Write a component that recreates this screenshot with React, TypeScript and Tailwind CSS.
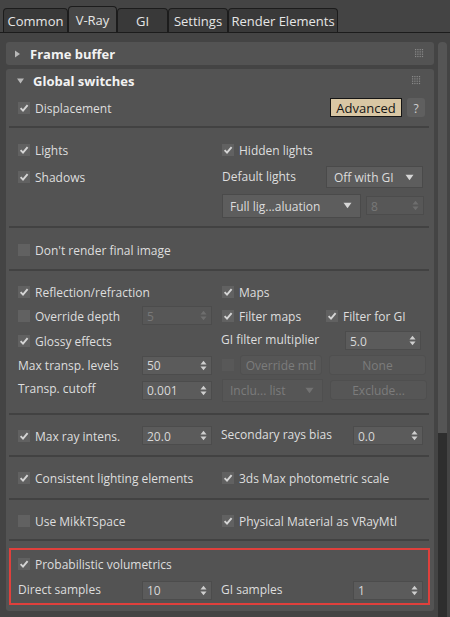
import React from "react";

const FONT = { fontFamily: '"Open Sans", "Noto Sans", sans-serif' };

function Check({ checked = true, disabled = false }: { checked?: boolean; disabled?: boolean }) {
  return (
    <span
      className={
        "flex h-[12px] w-[12px] shrink-0 items-center justify-center " +
        (disabled ? "bg-[#585858]" : "bg-[#616161]")
      }
    >
      {checked && (
        <svg width="10" height="10" viewBox="0 0 10 10">
          <path d="M1.6 5.2 L4 7.6 L8.6 2.2" fill="none" stroke="#d6d6d6" strokeWidth="1.9" />
        </svg>
      )}
    </span>
  );
}

function CheckLabel({ label, checked = true }: { label: string; checked?: boolean }) {
  return (
    <div className="flex items-center gap-[5px]">
      <Check checked={checked} />
      <span className="pt-[2px] text-[#dedede]">{label}</span>
    </div>
  );
}

function Arrows({ disabled = false }: { disabled?: boolean }) {
  const c = disabled ? "#6e6e6e" : "#cfcfcf";
  return (
    <svg width="7" height="11" viewBox="0 0 7 11" className="shrink-0">
      <path d="M0.5 4.5 L3.5 0.8 L6.5 4.5 Z" fill={c} />
      <path d="M0.5 6.5 L3.5 10.2 L6.5 6.5 Z" fill={c} />
    </svg>
  );
}

function Spinner({ value, w, disabled = false }: { value: string; w: string; disabled?: boolean }) {
  return (
    <div
      className={
        "flex h-[19px] items-center justify-between border border-[#4c4c4c] pl-[4px] pr-[4px] " +
        w +
        (disabled ? " bg-[#575757] text-[#787878]" : " bg-[#5b5b5b] text-[#d8d8d8]")
      }
    >
      <span className="pt-[2px]">{value}</span>
      <Arrows disabled={disabled} />
    </div>
  );
}

function Dropdown({ label, w, h = "h-[22px]", disabled = false }: { label: string; w: string; h?: string; disabled?: boolean }) {
  return (
    <div
      className={
        "flex items-center justify-between border pl-[7px] pr-[8px] " +
        w +
        " " +
        h +
        (disabled
          ? " border-[#4f4f4f] bg-[#565656] text-[#7c7c7c]"
          : " border-[#4a4a4a] bg-[#5d5d5d] text-[#dcdcdc]")
      }
    >
      <span className="pt-[2px]">{label}</span>
      <svg width="9" height="7" viewBox="0 0 9 7">
        <path d="M0.5 0.8 L8.5 0.8 L4.5 6.2 Z" fill={disabled ? "#727272" : "#d6d6d6"} />
      </svg>
    </div>
  );
}

function Btn({ label, w }: { label: string; w: string }) {
  return (
    <div
      className={
        "flex h-[20px] items-center justify-center rounded-[3px] border border-[#4f4f4f] bg-[#565656] pt-[2px] text-[#7c7c7c] " +
        w
      }
    >
      {label}
    </div>
  );
}

function Sep({ mt }: { mt: string }) {
  return <div className={"mr-[2px] h-[2px] bg-[#424242] " + mt} />;
}

function Grip() {
  return (
    <svg width="9" height="9" viewBox="0 0 9 9">
      {[0, 1, 2, 3].map((r) =>
        [0, 1, 2, 3].map((c) => <rect key={r + "-" + c} x={c * 2.3} y={r * 2.3} width="1.2" height="1.2" fill="#8a8a8a" />)
      )}
    </svg>
  );
}

function RolloutHead({ title, open }: { title: string; open: boolean }) {
  return (
    <div className="flex h-[23px] items-center justify-between pl-[8px] pr-[10px]">
      <div className="flex items-center gap-[9px]">
        <svg width="7" height="8" viewBox="0 0 7 8">
          {open ? <path d="M0 1.5 L7 1.5 L3.5 6.5 Z" fill="#b8b8b8" /> : <path d="M1 0.5 L6 4 L1 7.5 Z" fill="#b8b8b8" />}
        </svg>
        <span className="pt-[1px] text-[13px] font-bold text-[#f2f2f2]">{title}</span>
      </div>
      <Grip />
    </div>
  );
}

const tabs = ["Common", "V-Ray", "GI", "Settings", "Render Elements"];
const tabW = ["w-[65px]", "w-[49px]", "w-[51px]", "w-[60px]", "w-[110px]"];

export default function App() {
  return (
    <div className="h-[617px] w-[450px] overflow-hidden bg-[#444444] text-[12px] leading-none" style={FONT}>
      {/* tab strip */}
      <div className="flex h-[33px] items-end border-b border-[#1c1c1c] pl-[3px]">
        {tabs.map((t, i) => (
          <div
            key={t}
            className={
              "flex items-center justify-center rounded-t-[4px] border border-b-0 border-[#1c1c1c] pt-[1px] text-[13px] text-[#e6e6e6] " +
              tabW[i] +
              (i === 1 ? " h-[26px] bg-[#464646]" : " h-[24px] bg-[#393939]")
            }
          >
            {t}
          </div>
        ))}
      </div>

      <div className="flex pt-[9px]">
        <div className="ml-[6px] w-[428px]">
          <div className="rounded-[3px] bg-[#535353]">
            <RolloutHead title="Frame buffer" open={false} />
          </div>

          <div className="mt-[4px] h-[542px] rounded-[3px] bg-[#535353] pl-[3px] pr-[3px]">
            <RolloutHead title="Global switches" open={true} />

            <div className="pl-[9px] pr-[6px]">
              <div className="mt-[3px] flex h-[25px] items-center justify-between">
                <CheckLabel label="Displacement" />
                <div className="flex gap-[5px]">
                  <div className="flex h-[19px] w-[72px] items-center justify-center border border-[#151515] bg-[#d9c7a4] pt-[1px] text-[13px] text-[#151515]">
                    Advanced
                  </div>
                  <div className="flex h-[19px] w-[18px] items-center justify-center rounded-[3px] bg-[#5f5f5f] pt-[2px] text-[#cfcfcf]">
                    ?
                  </div>
                </div>
              </div>
            </div>

            <Sep mt="mt-[6px]" />

            <div className="pl-[9px]">
              <div className="mt-[11px] flex h-[22px] items-center">
                <div className="w-[204px]">
                  <CheckLabel label="Lights" />
                </div>
                <CheckLabel label="Hidden lights" />
              </div>
              <div className="mt-[4px] flex h-[24px] items-center">
                <div className="w-[204px]">
                  <CheckLabel label="Shadows" />
                </div>
                <span className="w-[104px] text-[#dedede]">Default lights</span>
                <Dropdown label="Off with GI" w="w-[97px]" />
              </div>
              <div className="mt-[4px] flex h-[25px] items-center">
                <div className="w-[204px]" />
                <Dropdown label="Full lig...aluation" w="w-[139px]" h="h-[24px]" />
                <div className="ml-[5px]">
                  <Spinner value="8" w="w-[58px]" disabled />
                </div>
              </div>
            </div>

            <Sep mt="mt-[8px]" />

            <div className="pl-[9px]">
              <div className="mt-[11px] flex h-[22px] items-center">
                <CheckLabel label="Don't render final image" checked={false} />
              </div>
            </div>

            <Sep mt="mt-[8px]" />

            <div className="pl-[9px]">
              <div className="mt-[10px] flex h-[22px] items-center">
                <div className="w-[204px]">
                  <CheckLabel label="Reflection/refraction" />
                </div>
                <CheckLabel label="Maps" />
              </div>
              <div className="mt-[2px] flex h-[21px] items-center">
                <div className="w-[124px]">
                  <CheckLabel label="Override depth" checked={false} />
                </div>
                <Spinner value="5" w="w-[70px]" disabled />
                <div className="ml-[10px] w-[104px]">
                  <CheckLabel label="Filter maps" />
                </div>
                <CheckLabel label="Filter for GI" />
              </div>
              <div className="mt-[3px] flex h-[23px] items-center">
                <div className="w-[203px]">
                  <CheckLabel label="Glossy effects" />
                </div>
                <span className="w-[124px] pb-[1px] text-[#dedede]">GI filter multiplier</span>
                <Spinner value="5.0" w="w-[76px]" />
              </div>
              <div className="mt-[2px] flex h-[22px] items-center">
                <span className="w-[124px] pt-[1px] text-[#dedede]">Max transp. levels</span>
                <Spinner value="50" w="w-[70px]" />
                <div className="ml-[10px] flex items-center gap-[6px]">
                  <Check checked={false} disabled />
                  <Btn label="Override mtl" w="w-[82px]" />
                </div>
                <div className="ml-[7px]">
                  <Btn label="None" w="w-[97px]" />
                </div>
              </div>
              <div className="mt-[2px] flex h-[24px] items-center">
                <span className="w-[124px] pb-[2px] text-[#dedede]">Transp. cutoff</span>
                <Spinner value="0.001" w="w-[70px]" />
                <div className="ml-[10px]">
                  <Dropdown label="Inclu... list" w="w-[101px]" h="h-[23px]" disabled />
                </div>
                <div className="ml-[7px]">
                  <Btn label="Exclude..." w="w-[97px]" />
                </div>
              </div>
            </div>

            <Sep mt="mt-[11px]" />

            <div className="pl-[9px]">
              <div className="mt-[10px] flex h-[21px] items-center">
                <div className="w-[124px]">
                  <CheckLabel label="Max ray intens." />
                </div>
                <Spinner value="20.0" w="w-[70px]" />
                <span className="ml-[9px] w-[132px] pb-[1px] text-[#dedede]">Secondary rays bias</span>
                <Spinner value="0.0" w="w-[70px]" />
              </div>
            </div>

            <Sep mt="mt-[9px]" />

            <div className="pl-[9px]">
              <div className="mt-[10px] flex h-[22px] items-center">
                <div className="w-[204px]">
                  <CheckLabel label="Consistent lighting elements" />
                </div>
                <CheckLabel label="3ds Max photometric scale" />
              </div>
            </div>

            <Sep mt="mt-[9px]" />

            <div className="pl-[9px]">
              <div className="mt-[10px] flex h-[22px] items-center">
                <div className="w-[204px]">
                  <CheckLabel label="Use MikkTSpace" checked={false} />
                </div>
                <CheckLabel label="Physical Material as VRayMtl" />
              </div>
            </div>

            <Sep mt="mt-[7px]" />

            <div className="mr-[1px] mt-[7px] h-[57px] border-2 border-[#e0403c] pl-[7px]">
              <div className="mt-[4px] flex h-[20px] items-center">
                <CheckLabel label="Probabilistic volumetrics" />
              </div>
              <div className="mt-[6px] flex h-[20px] items-center">
                <span className="w-[124px] pb-[1px] text-[#dedede]">Direct samples</span>
                <Spinner value="10" w="w-[70px]" />
                <span className="ml-[9px] w-[132px] pb-[1px] text-[#dedede]">GI samples</span>
                <Spinner value="1" w="w-[70px]" />
              </div>
            </div>
          </div>
        </div>

        <div className="ml-[4px] flex h-[575px] w-[9px] flex-col">
          <div className="h-[391px] rounded-t-[4px] bg-[#555555]" />
          <div className="flex-1 bg-[#2e2e2e]" />
        </div>
      </div>
    </div>
  );
}
